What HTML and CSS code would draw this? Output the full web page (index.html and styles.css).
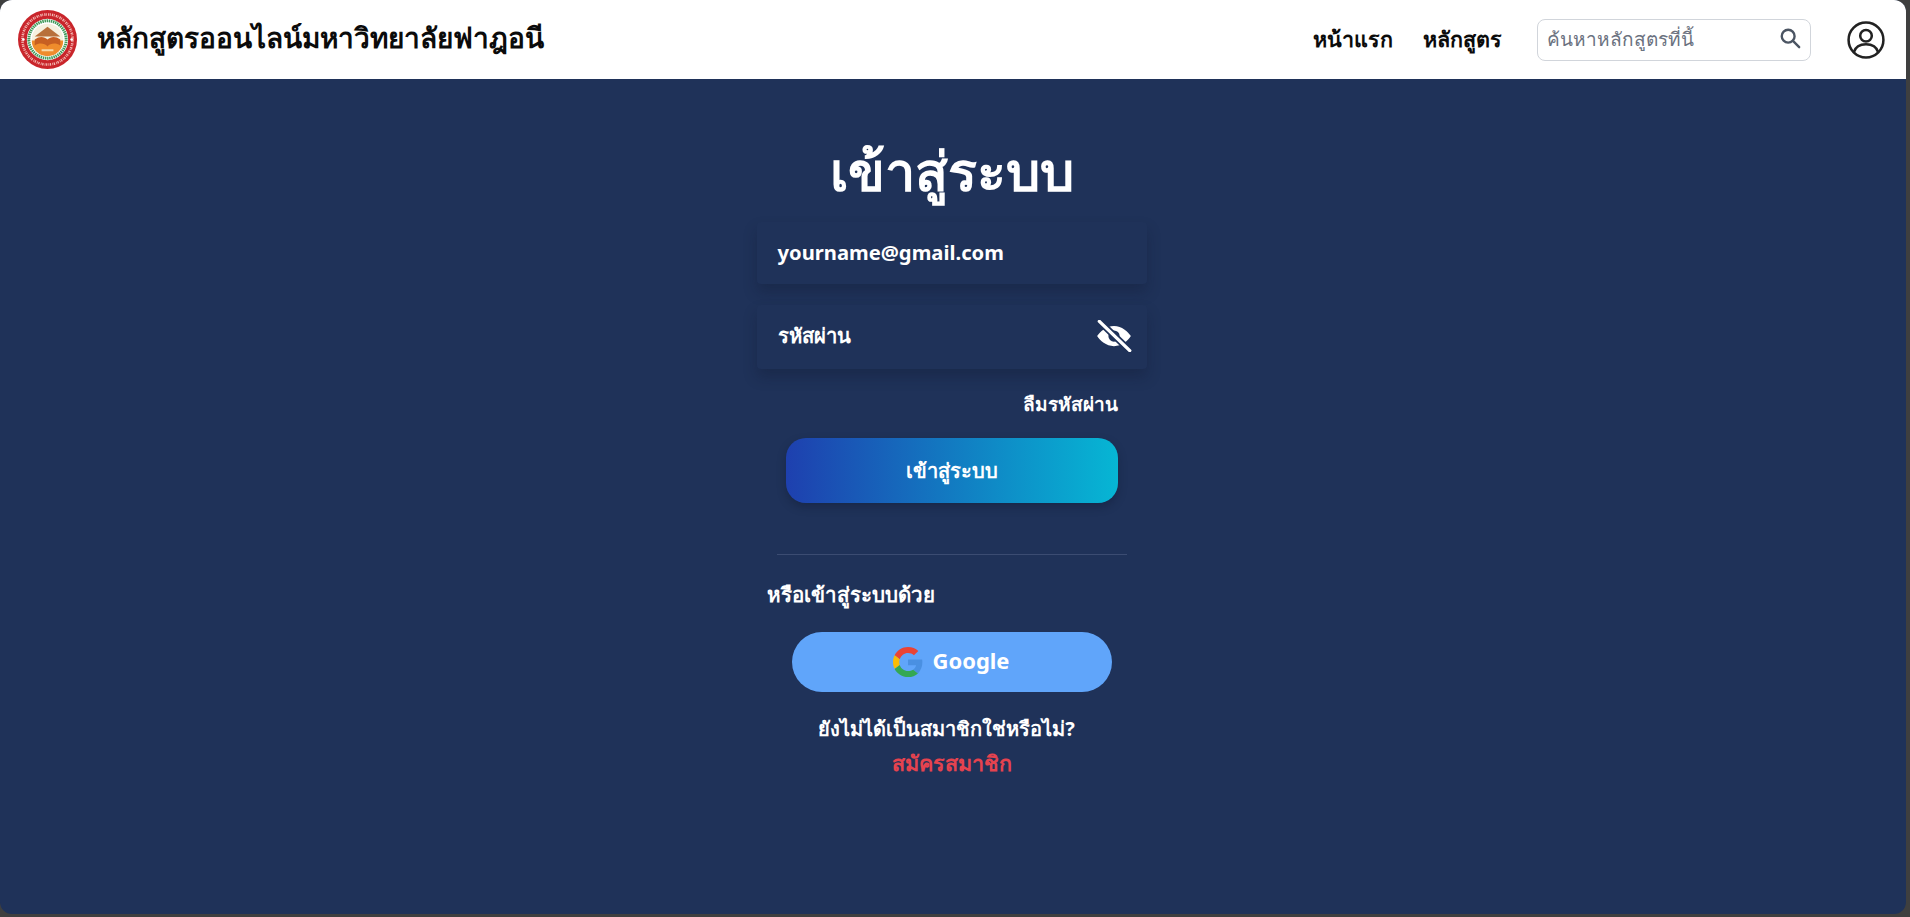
FILE: index.html
```html
<!DOCTYPE html>
<html lang="th">
<head>
<meta charset="utf-8">
<title>เข้าสู่ระบบ</title>
<link rel="stylesheet" href="styles.css">
</head>
<body>
<div class="window">
  <header class="topbar">
    <a class="brand">
      <svg class="logo" viewBox="0 0 60 60" aria-hidden="true">
        <circle cx="30" cy="30" r="30" fill="#c9252b"/>
        <circle cx="30" cy="30" r="25.500" fill="none" stroke="#f3b9b4" stroke-width="2.600" stroke-dasharray="1.300 .7 .8 1.200"/>
        <circle cx="5.500" cy="30" r="1.300" fill="#fff"/>
        <circle cx="54.500" cy="30" r="1.300" fill="#fff"/>
        <circle cx="30" cy="30" r="21" fill="#fff"/>
        <circle cx="30" cy="30" r="19" fill="none" stroke="#3f9a58" stroke-width="3" stroke-dasharray="1.500 .7"/>
        <circle cx="30" cy="30" r="16" fill="#f6f1df"/>
        <path d="M17 27 30 17l13 10z" fill="#b8703a"/>
        <path d="M14 31h32a16 16 0 0 1-32 0z" fill="#ef8c2c"/>
        <path d="M17 30c5-4 10-3 13 0 3-3 8-4 13 0v6c-5-3-10-2-13 1-3-3-8-4-13-1z" fill="#c75f22"/>
        <path d="M24 40h12v2H24z" fill="#f8d9a8"/>
      </svg>
      <span class="brand-name">หลักสูตรออนไลน์มหาวิทยาลัยฟาฎอนี</span>
    </a>
    <nav class="nav">
      <a class="nav-link">หน้าแรก</a>
      <a class="nav-link">หลักสูตร</a>
      <div class="search">
        <span class="search-text">ค้นหาหลักสูตรที่นี้</span>
        <svg class="search-icon" viewBox="0 0 24 24" aria-hidden="true"><circle cx="10" cy="10" r="7"/><path d="m15.500 15.500 6.500 6.500"/></svg>
      </div>
      <svg class="user-icon" viewBox="0 0 36 36" aria-hidden="true">
        <circle cx="18" cy="18" r="16.500"/>
        <circle cx="18" cy="14" r="5.500"/>
        <path d="M6.500 29.500c1.500-5 6-7.500 11.500-7.500s10 2.500 11.500 7.500"/>
      </svg>
    </nav>
  </header>
  <main class="main">
    <section class="login">
      <h1 class="login-title">เข้าสู่ระบบ</h1>
      <div class="field field-email">yourname@gmail.com</div>
      <div class="field field-pass">
        <span>รหัสผ่าน</span>
        <svg class="eye" viewBox="0 0 32 28" aria-hidden="true">
          <path class="eye-shape" fill-rule="evenodd" d="M16 5C9 5 3.500 10 1 14c2.500 4 8 9 15 9s12.500-5 15-9c-2.500-4-8-9-15-9zm0 4a5 5 0 1 1 0 10 5 5 0 0 1 0-10z"/>
          <path class="eye-slash-bg" d="M3 1l27 26"/>
          <path class="eye-slash" d="M3 1l27 26"/>
        </svg>
      </div>
      <a class="forgot">ลืมรหัสผ่าน</a>
      <button class="submit">เข้าสู่ระบบ</button>
      <hr class="divider">
      <p class="or">หรือเข้าสู่ระบบด้วย</p>
      <button class="google">
        <svg class="g-icon" viewBox="0 0 48 48" aria-hidden="true">
          <path fill="#ea4335" d="M24 9.500c3.900 0 7 1.400 9.500 3.700l7-7C36.300 2.400 30.700 0 24 0 14.600 0 6.500 5.400 2.600 13.200l8.200 6.400C12.700 13.700 17.900 9.500 24 9.500z"/>
          <path fill="#4a90e2" d="M47 24.500c0-1.600-.1-3.100-.4-4.500H24v9h13c-.6 3-2.300 5.500-4.800 7.200l7.800 6C44.400 37.500 47 31.600 47 24.500z"/>
          <path fill="#fbbc05" d="M10.800 28.600c-.5-1.400-.8-3-.8-4.600s.3-3.200.8-4.600l-8.200-6.200C.9 16.500 0 20.100 0 24s.9 7.500 2.600 10.800z"/>
          <path fill="#34a853" d="M24 48c6.500 0 11.900-2.100 15.900-5.800l-7.700-6c-2.200 1.400-4.900 2.300-8.200 2.300-6.100 0-11.300-4.100-13.200-9.700l-8.200 6.300C6.500 42.600 14.600 48 24 48z"/>
        </svg>
        <span class="google-label">Google</span>
      </button>
      <p class="signup-q">ยังไม่ได้เป็นสมาชิกใช่หรือไม่?</p>
      <a class="signup">สมัครสมาชิก</a>
    </section>
  </main>
</div>
</body>
</html>
```
FILE: styles.css
```css
* { box-sizing: border-box; }
html, body { height: 100%; }
body {
  margin: 0;
  background: #3f3f3f;
  font-family: "Noto Sans", "Inter", "DejaVu Sans", sans-serif;
  padding: 0 4px 3px 0;
  overflow: hidden;
}
.window {
  height: 100%;
  display: flex;
  flex-direction: column;
  background: #1f3259;
  border-radius: 12px;
  overflow: hidden;
}
.topbar {
  height: 79px;
  flex: none;
  background: #fff;
  display: flex;
  align-items: center;
  justify-content: space-between;
  padding: 0 21px 0 18px;
}
.brand { display: flex; align-items: center; gap: 20px; }
.logo { width: 59px; height: 59px; flex: none; }
.brand-name { font-size: 28px; font-weight: 700; color: #0b0b0b; padding-bottom: 3px; }
.nav { display: flex; align-items: center; }
.nav-link { font-size: 21.500px; font-weight: 700; color: #0b0b0b; margin-right: 30px; padding-bottom: 2px; }
.nav-link + .nav-link { margin-right: 35px; }
.search {
  width: 274px;
  height: 42px;
  border: 1px solid #d1d5db;
  border-radius: 8px;
  display: flex;
  align-items: center;
  justify-content: space-between;
  padding: 0 9px;
}
.search-text { font-size: 19px; color: #6b7280; padding-bottom: 2px; }
.search-icon { width: 22px; height: 22px; fill: none; stroke: #4b5563; stroke-width: 2.600; stroke-linecap: round; margin-bottom: 3px; }
.user-icon { width: 38px; height: 38px; margin-left: 36px; fill: none; stroke: #222; stroke-width: 2.400; }
.main { flex: 1; display: flex; justify-content: center; }
.login {
  width: 390px;
  margin-left: -3px;
  display: flex;
  flex-direction: column;
  color: #fff;
}
.login-title {
  margin: 49px 0 0;
  text-align: center;
  font-size: 54px;
  line-height: 84px;
  font-weight: 700;
  height: 94px;
}
.field {
  height: 62px;
  background: #1f3259;
  box-shadow: 0 8px 14px rgba(15, 23, 42, .28);
  border-radius: 4px;
  display: flex;
  align-items: center;
  justify-content: space-between;
  font-size: 20.200px;
  font-weight: 700;
  padding: 0 21px 2px;
}
.field-pass { margin-top: 21px; height: 64px; padding-right: 15px; }
.eye { width: 36px; height: 32px; }
.eye-shape { fill: #fff; }
.eye-slash-bg { stroke: #1f3259; stroke-width: 6; }
.eye-slash { stroke: #fff; stroke-width: 3; stroke-linecap: round; }
.forgot { align-self: flex-end; margin: 22px 29px 0 0; font-size: 19px; line-height: 26px; font-weight: 700; }
.submit {
  align-self: flex-end;
  width: 332px;
  height: 65px;
  margin: 21px 29px 0 0;
  border: 0;
  border-radius: 20px;
  background: linear-gradient(90deg, #1e40af, #06b6d4);
  box-shadow: 0 4px 8px rgba(15, 23, 42, .35);
  color: #fff;
  font: inherit;
  font-size: 20px;
  font-weight: 700;
}
.divider {
  width: 350px;
  margin: 51px 0 0 20px;
  border: 0;
  border-top: 1px solid #3b4c72;
}
.or { margin: 25px 0 0 10px; font-size: 20.500px; line-height: 28px; font-weight: 700; }
.google {
  align-self: center;
  width: 320px;
  height: 60px;
  margin: 24px 0 0;
  border: 0;
  border-radius: 30px;
  background: #60a5fa;
  color: #fff;
  font: inherit;
  font-size: 22px;
  font-weight: 700;
  display: flex;
  align-items: center;
  justify-content: center;
  gap: 9px;
}
.google-label { padding-bottom: 5px; }
.g-icon { width: 30px; height: 30px; }
.signup-q { margin: 21px 10px 0 0; text-align: center; font-size: 20px; line-height: 32px; font-weight: 700; }
.signup { margin-top: 2px; text-align: center; font-size: 21.500px; line-height: 32px; font-weight: 700; color: #e5434f; }
```
